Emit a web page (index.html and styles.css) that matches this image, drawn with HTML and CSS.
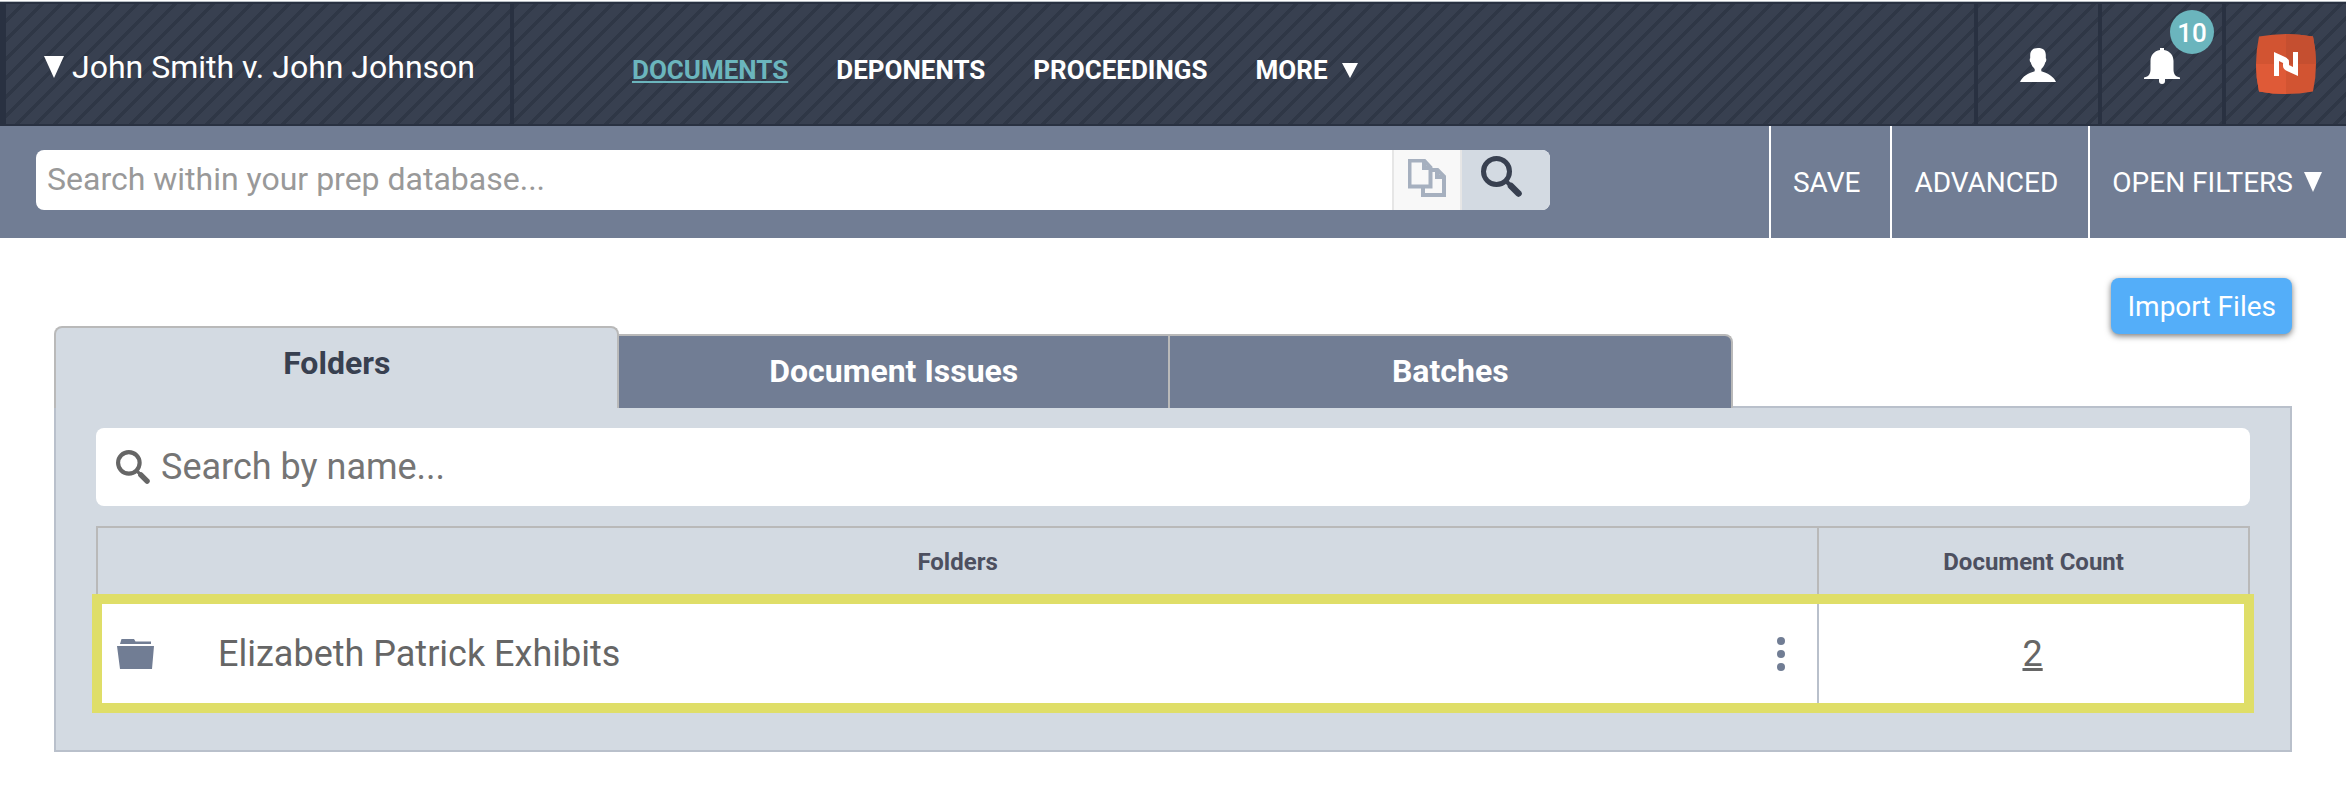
FILE: index.html
```html
<!DOCTYPE html>
<html lang="en">
<head>
<meta charset="utf-8">
<title>Documents - John Smith v. John Johnson</title>
<link rel="stylesheet" href="styles.css">
</head>
<body>
<header class="topbar">
  <button class="case-switch" type="button"><svg class="caret caret-lg" viewBox="0 0 20 22" aria-hidden="true"><path d="M0 0h20L10 22z"/></svg>John Smith v. John Johnson</button>
  <nav class="nav" aria-label="Main">
    <a class="nav-link active" href="#documents">DOCUMENTS</a>
    <a class="nav-link" href="#deponents">DEPONENTS</a>
    <a class="nav-link" href="#proceedings">PROCEEDINGS</a>
    <button class="nav-link more" type="button">MORE <svg class="caret caret-sm" viewBox="0 0 16 15" aria-hidden="true"><path d="M0 0h16L8 15z"/></svg></button>
  </nav>
  <div class="tools">
    <button class="tool" type="button" aria-label="Account">
      <svg class="tool-icon" viewBox="0 0 36 36" aria-hidden="true"><path d="M18 0c5.500 0 8 2.800 7.800 7.500v2.700c1 .8.400 3.600-.6 4.200-.7 3-2.200 5-3.900 6.600v2.300C27 25 33.500 28 36 34H0c2.500-6 9-9 14.700-10.700V21c-1.700-1.600-3.200-3.600-3.900-6.600-1-.6-1.600-3.400-.6-4.200V7.500C10 2.800 12.500 0 18 0z"/></svg>
    </button>
    <button class="tool" type="button" aria-label="Notifications">
      <svg class="tool-icon" viewBox="0 0 36 36" aria-hidden="true"><path d="M16 0h4v2c6 1 9.500 5.500 9.500 11v8c0 5 1.500 7.500 6.500 8.500V31H21v2a3 3 0 0 1-6 0v-2H0v-1.500C5 28.500 6.500 26 6.500 21v-8C6.500 7.500 10 3 16 2z"/></svg>
      <span class="badge">10</span>
    </button>
    <a class="tool tool-home" href="#home" aria-label="Home">
      <svg class="logo" viewBox="0 0 60 60" aria-hidden="true">
        <clipPath id="tile"><path d="M3 2.500Q30-2.500 57 2.500 63 30 57 57.500 30 62.500 3 57.500-3 30 3 2.500z"/></clipPath>
        <g clip-path="url(#tile)"><path fill="#d25432" d="M0 0h60v60H0z"/><path fill="#c54f30" d="M30 0h30v30H30z"/><path fill="#df5a37" d="M0 30h30v30H0z"/></g>
        <path fill="#fff" d="M18 18l11 5q4 2 4 5v4l-10-5v15h-5zM42 42l-11-5q-4-2-4-5v-4l10 5V18h5z"/>
      </svg>
    </a>
  </div>
</header>

<div class="searchbar">
  <form class="search" role="search">
    <input class="search-input" type="search" aria-label="Search within your prep database" placeholder="Search within your prep database...">
    <button class="search-copy" type="button" aria-label="Copy search">
      <svg class="copy-icon" viewBox="0 0 38 38" aria-hidden="true"><path d="M1.500 1.500H16l6.500 7v19H1.500zM16 1.500V9h6.500M24 11h5.500l6.500 6.500v18.500H15v-8.500M29 11v7h7"/></svg>
    </button>
    <button class="search-go" type="submit" aria-label="Search">
      <svg class="find-icon" viewBox="0 0 41 41" aria-hidden="true"><circle cx="15.500" cy="15.500" r="13" stroke-width="5"/><path d="M26 26l4 4" stroke-width="4"/><path d="M30 30l7.500 7.500" stroke-width="6.500"/></svg>
    </button>
  </form>
  <div class="actions">
    <button class="action" type="button">SAVE</button>
    <button class="action" type="button">ADVANCED</button>
    <button class="action filters" type="button">OPEN FILTERS <svg class="caret caret-md" viewBox="0 0 18 20" aria-hidden="true"><path d="M0 0h18L9 20z"/></svg></button>
  </div>
</div>

<main class="content">
  <div class="toolbar">
    <div class="tabs" role="tablist">
      <button class="tab selected" type="button" role="tab" aria-selected="true">Folders</button>
      <button class="tab" type="button" role="tab" aria-selected="false">Document Issues</button>
      <button class="tab" type="button" role="tab" aria-selected="false">Batches</button>
    </div>
    <button class="import" type="button">Import Files</button>
  </div>
  <section class="panel" role="tabpanel">
    <label class="name-search">
      <svg class="name-icon" viewBox="0 0 41 41" aria-hidden="true"><circle cx="15.500" cy="15.500" r="13" stroke-width="5"/><path d="M26 26l4 4" stroke-width="4"/><path d="M30 30l7.500 7.500" stroke-width="6.500"/></svg>
      <input class="name-input" type="text" aria-label="Search by name" placeholder="Search by name...">
    </label>
    <table class="folders">
      <thead><tr><th class="col-name">Folders</th><th class="col-count">Document Count</th></tr></thead>
      <tbody>
        <tr class="marked">
          <td>
            <div class="folder">
              <svg class="folder-icon" viewBox="0 0 37 30" aria-hidden="true"><path d="M3 5l1.500-5H17l1.500 2.500H34V5zM0 7h37l-2 23H3z"/></svg>
              <span class="folder-name">Elizabeth Patrick Exhibits</span>
              <button class="menu" type="button" aria-label="Folder actions"><svg class="dots" viewBox="0 0 8 34" aria-hidden="true"><circle cx="4" cy="4" r="4"/><circle cx="4" cy="17" r="4"/><circle cx="4" cy="30" r="4"/></svg></button>
            </div>
          </td>
          <td class="count"><a class="count-link" href="#folder">2</a></td>
        </tr>
      </tbody>
    </table>
  </section>
</main>
</body>
</html>
```
FILE: styles.css
```css
* { box-sizing: border-box; }
body { margin: 0; background: #fff; color: #666; font-family: Roboto, "Liberation Sans", sans-serif; }
button, input { margin: 0; padding: 0; border: 0; background: none; color: inherit; font: inherit; }
button { cursor: pointer; }
a { color: inherit; }
svg { display: block; flex: none; }

.topbar {
  display: flex;
  height: 124px;
  margin-top: 2px;
  border: solid #293141;
  border-width: 2px 0 2px 6px;
  box-shadow: 0 -1px #b9bfc4;
  background: linear-gradient(135deg, #384050 39%, #2f3746 39% 50%, #384050 50% 89%, #2f3746 89%) 0 0 / 19px 19px;
  color: #fff;
}
.case-switch { display: flex; align-items: center; gap: 8px; padding: 6px 35px 0 38px; border-right: 4px solid #293141; font-size: 32px; }
.caret { fill: currentColor; }
.caret-lg { width: 20px; height: 22px; }
.caret-md { width: 18px; height: 20px; }
.caret-sm { width: 16px; height: 15px; }
.nav { display: flex; flex: 1; align-items: center; gap: 48px; padding: 12px 0 0 118px; font-size: 26px; font-weight: 700; }
.nav-link { text-decoration: none; }
.nav-link.active { color: #6bb5bd; text-decoration: underline; }
.more { display: flex; align-items: center; gap: 14px; }
.tools { display: flex; }
.tool { position: relative; display: flex; align-items: center; justify-content: center; width: 124px; padding-top: 4px; border-left: 4px solid #293141; }
.tool-home { padding-top: 0; }
.tool-icon { width: 36px; height: 36px; fill: currentColor; }
.badge { position: absolute; top: 6px; right: 8px; width: 44px; height: 44px; border-radius: 50%; background: #6bb5bd; font-size: 26px; font-weight: 500; line-height: 46px; text-align: center; }
.logo { width: 60px; height: 60px; }

.searchbar { display: flex; justify-content: space-between; height: 112px; background: #717d94; color: #fff; }
.search { display: flex; flex: 0 1 1514px; height: 60px; margin: 24px 0 0 36px; overflow: hidden; border-radius: 8px; background: #fff; }
.search-input { flex: 1; min-width: 0; padding: 0 11px 2px; outline: 0; color: #444; font-size: 32px; }
.search-input::placeholder { color: #999; opacity: 1; }
.search-copy { width: 70px; padding: 0 0 4px 14px; border: solid #e6e6e6; border-width: 0 2px; background: #f8f8f8; }
.copy-icon { width: 38px; height: 38px; fill: none; stroke: #a6b0bf; stroke-width: 4; }
.search-go { width: 88px; padding: 0 0 8px 19px; background: #d3dae2; }
.find-icon, .name-icon { fill: none; stroke: currentColor; }
.find-icon { width: 41px; height: 41px; color: #384050; }
.search-go path:last-child, .name-icon path:last-child { stroke-linecap: round; }
.actions { display: flex; flex: none; font-size: 28px; }
.action { padding: 0 30px 0 22px; border-left: 2px solid #fff; }
.filters { display: flex; align-items: center; gap: 11px; padding-right: 24px; }

.content { padding: 40px 54px 34px; }
.toolbar { display: flex; align-items: flex-start; justify-content: space-between; }
.tabs { display: flex; align-items: flex-end; width: 75%; height: 82px; margin: 48px 0 -2px; }
.tab { flex: 551; height: 74px; padding-bottom: 2px; border: solid #b9b9b9; border-width: 2px 2px 0 0; background: #717d94; color: #fff; font-size: 32px; font-weight: 700; }
.tab:last-child { flex: 563; border-radius: 0 8px 0 0; }
.tab.selected { flex: 564; height: 82px; padding-bottom: 10px; border-left-width: 2px; border-radius: 8px 8px 0 0; background: #d3dae2; color: #384050; }
.import { height: 56px; padding: 0 16px; border-radius: 8px; background: #54aef9; box-shadow: 0 2px 6px #0008; color: #fff; font-size: 28px; }
.panel { padding: 20px 40px 41px; border: 2px solid #b9c0cb; background: #d3dae2; }
.name-search { display: flex; align-items: center; height: 78px; padding: 0 20px; border-radius: 8px; background: #fff; }
.name-icon { width: 34px; height: 34px; margin-right: 11px; }
.name-input { flex: 1; min-width: 0; height: 78px; outline: 0; font-size: 36px; }
.name-input::placeholder { color: #757575; opacity: 1; }
.folders { width: 100%; margin-top: 20px; border-collapse: separate; border-spacing: 0; table-layout: fixed; }
.folders th { height: 72px; padding: 0 0 2px; border: solid #b9b9b9; border-width: 2px 2px 0 0; color: #4d5060; font-size: 24px; font-weight: 700; }
.folders .col-name { width: 80%; border-left-width: 2px; }
.col-count { width: 20%; }
.folders td { height: 111px; padding: 0; background: #fff; font-size: 36px; }
.folders td:first-child { border-right: 2px solid #b9c0cb; }
.marked { outline: 10px solid #dfde68; outline-offset: -6px; }
.folder { display: flex; align-items: center; padding: 0 32px 0 21px; }
.folder-icon { width: 37px; height: 30px; fill: #717d94; }
.folder-name { flex: 1; padding-left: 64px; }
.dots { width: 8px; height: 34px; fill: #717d94; }
.folders .count { padding-right: 4px; text-align: center; }
```
